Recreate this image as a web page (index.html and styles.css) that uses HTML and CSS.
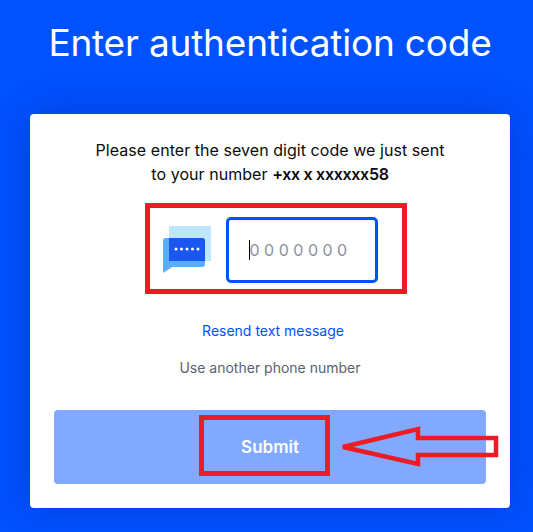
FILE: index.html
```html
<!DOCTYPE html>
<html lang="en">
<head>
    <meta charset="UTF-8">
    <meta name="viewport" content="width=device-width, initial-scale=1.0">
    <title>Enter authentication code</title>
    <link rel="stylesheet" href="styles.css">
</head>
<body>

<h1 class="page-title">Enter authentication code</h1>

<div class="card">
    <p class="intro">Please enter the seven digit code we just sent<br>to your number <b>+xx x xxxxxx58</b></p>

    <div class="code-row">
        <!-- sms icon -->
        <svg class="sms-icon" width="48" height="48" viewBox="0 0 48 48">
            <rect x="6" y="0" width="42" height="35" fill="#bfe6ff"/>
            <path d="M3 12H39a3 3 0 0 1 3 3V38a3 3 0 0 1-3 3H9L0 47V15a3 3 0 0 1 3-3z" fill="#56aeff"/>
            <path d="M6 12H39a3 3 0 0 1 3 3V35H6z" fill="#1a56f0"/>
            <circle cx="13" cy="23" r="1.5" fill="#fff"/>
            <circle cx="18.5" cy="23" r="1.5" fill="#fff"/>
            <circle cx="24" cy="23" r="1.5" fill="#fff"/>
            <circle cx="29.5" cy="23" r="1.5" fill="#fff"/>
            <circle cx="35" cy="23" r="1.5" fill="#fff"/>
        </svg>
        <div class="code-input">
            <span class="caret"></span>
            <span class="placeholder">0 0 0 0 0 0 0</span>
        </div>
    </div>

    <a class="resend" href="#">Resend text message</a>
    <a class="other-phone" href="#">Use another phone number</a>

    <button class="submit-btn">Submit</button>
</div>

<!-- red annotations drawn over the screenshot -->
<div class="mark mark-code"></div>
<div class="mark mark-submit"></div>
<svg class="mark-arrow" width="160" height="50" viewBox="0 0 160 50">
    <path d="M3 27L78 9V18H156V35H78V44z" fill="none" stroke="#ed1c24" stroke-width="4.5"/>
</svg>

</body>
</html>
```

FILE: styles.css
```css
body {
    box-sizing: border-box;
    margin: 0;
    padding-left: 7px;
    height: 532px;
    overflow: hidden;
    background-color: #0052ff;
    font-family: Inter, "Liberation Sans", sans-serif;
    display: flex;
    flex-direction: column;
    align-items: center;
}

.page-title {
    margin: 18px 0 46px;
    height: 50px;
    font-size: 37px;
    line-height: 50px;
    letter-spacing: -0.2px;
    font-weight: 400;
    white-space: nowrap;
    color: #fff;
}

.card {
    box-sizing: border-box;
    width: 480px;
    height: 394px;
    padding: 24px 24px 24px;
    background-color: #fff;
    border-radius: 4px;
    box-shadow: 0 0 40px rgba(0, 40, 180, 0.5);
    display: flex;
    flex-direction: column;
    align-items: center;
}

.intro {
    margin: 0;
    font-size: 16px;
    line-height: 24px;
    letter-spacing: 0.05px;
    text-align: center;
    color: #0a0b0d;
}

.intro b {
    font-weight: 600;
    letter-spacing: -0.3px;
}

.code-row {
    margin-top: 31px;
    display: flex;
    align-items: center;
    gap: 15px;
}

.sms-icon {
    display: block;
    flex-shrink: 0;
}

.code-input {
    box-sizing: border-box;
    width: 152px;
    height: 66px;
    border: 3px solid #0052ff;
    border-radius: 5px;
    padding-left: 20px;
    display: flex;
    align-items: center;
}

.caret {
    width: 1px;
    height: 20px;
    background-color: #000;
}

.placeholder {
    font-size: 16px;
    color: #8a919e;
}

.resend {
    margin-top: 38px;
    margin-left: 6px;
    font-size: 14px;
    line-height: 20px;
    color: #0052ff;
    text-decoration: none;
}

.other-phone {
    margin-top: 17px;
    font-size: 14px;
    line-height: 20px;
    color: #5b616e;
    text-decoration: none;
}

.submit-btn {
    margin-top: 32px;
    width: 432px;
    height: 74px;
    border: none;
    border-radius: 4px;
    background-color: #80a9ff;
    color: #fff;
    font-family: inherit;
    font-size: 17px;
    font-weight: 600;
}

/* annotations */
.mark {
    position: absolute;
    box-sizing: border-box;
    border: 5px solid #ed1c24;
}

.mark-code {
    left: 145px;
    top: 203px;
    width: 262px;
    height: 91px;
}

.mark-submit {
    left: 199px;
    top: 415px;
    width: 131px;
    height: 61px;
}

.mark-arrow {
    position: absolute;
    left: 340px;
    top: 420px;
}
```
